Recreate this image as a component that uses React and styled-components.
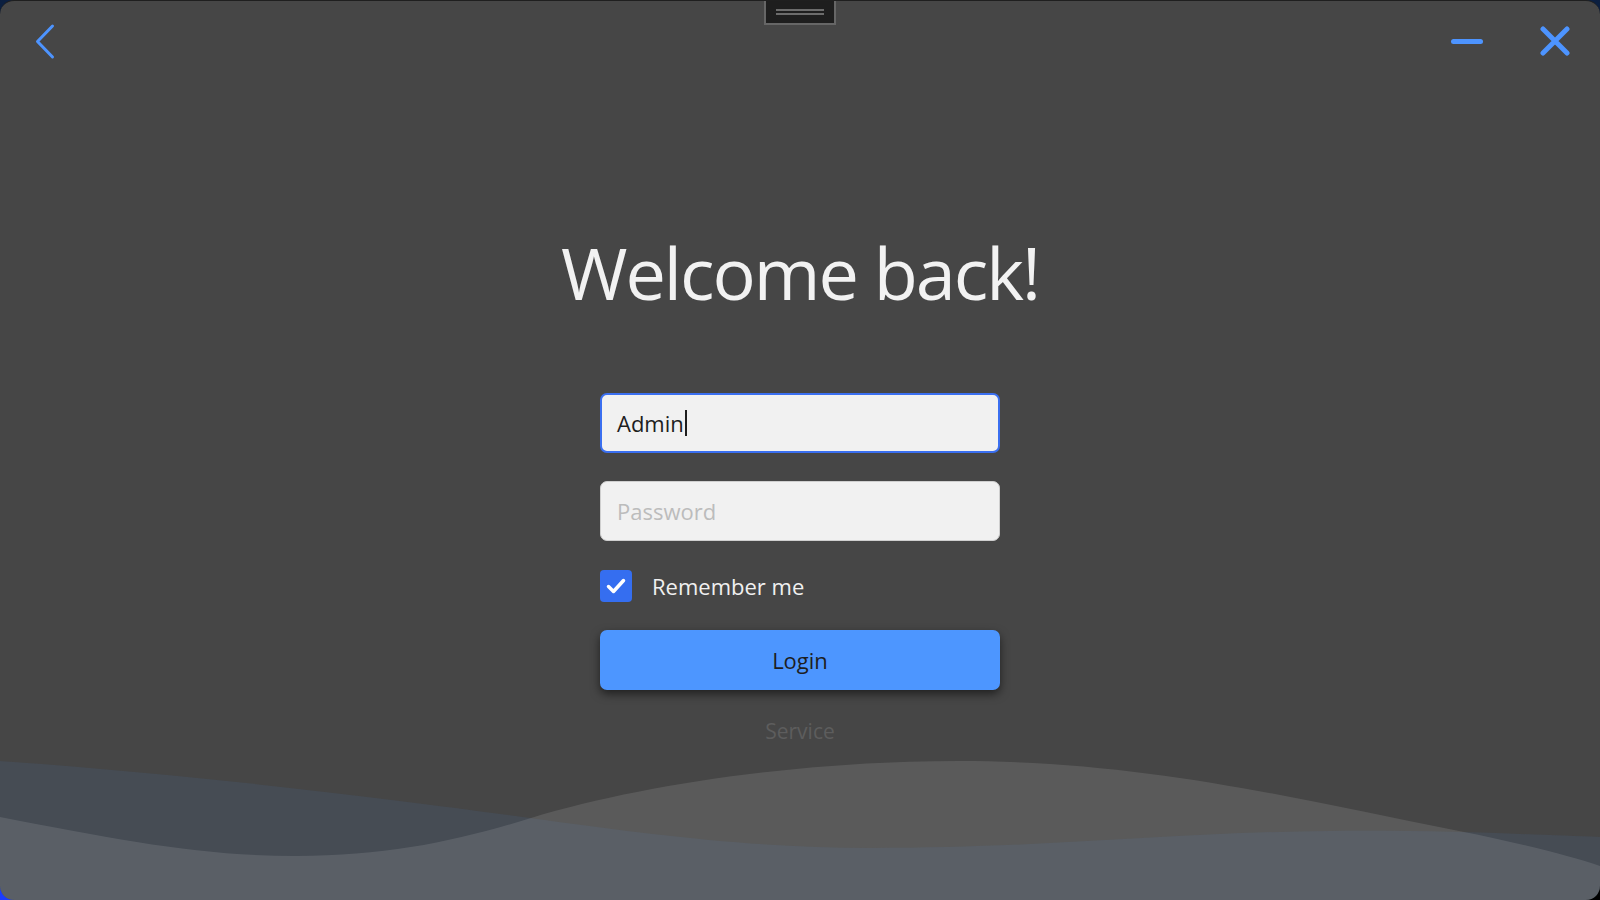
import React from 'react';
import styled, { createGlobalStyle } from 'styled-components';

const GlobalStyle = createGlobalStyle`
  html, body {
    margin: 0;
    padding: 0;
    height: 100%;
  }
  body {
    font-family: "Open Sans", "Noto Sans", sans-serif;
  }
`;

const Styled = {
  Desktop: styled.div`
    width: 100vw;
    height: 100vh;
    background:
      radial-gradient(circle at 0% 100%, #1b3cff 0, #1b3cff 22px, transparent 40px),
      linear-gradient(to bottom, #0b1f40 0%, #07142a 60%, #000 100%);
  `,
  Window: styled.div`
    position: relative;
    width: 100%;
    height: 100%;
    box-sizing: border-box;
    border-top: 1px solid #1f1f1f;
    border-radius: 14px;
    overflow: hidden;
    background-color: #464646;
    display: flex;
    flex-direction: column;
  `,
  TitleBar: styled.div`
    height: 79px;
    flex-shrink: 0;
    display: grid;
    grid-template-columns: 1fr auto 1fr;
    align-items: start;
  `,
  BackButton: styled.div`
    margin: 20px 0 0 33px;
    width: 24px;
    height: 40px;
    cursor: pointer;
  `,
  Handle: styled.div`
    width: 72px;
    height: 24px;
    box-sizing: border-box;
    border: 2px solid #666666;
    border-top: none;
    background-color: #1e1e1e;
    display: flex;
    flex-direction: column;
    align-items: center;
    justify-content: center;
    gap: 2px;
    padding-bottom: 1px;
  `,
  HandleLine: styled.div`
    width: 48px;
    height: 2px;
    background-color: #6c6c6c;
  `,
  Controls: styled.div`
    justify-self: end;
    display: flex;
    align-items: center;
    gap: 57px;
    margin: 25px 30px 0 0;
    height: 30px;
  `,
  Minimize: styled.div`
    width: 32px;
    height: 5px;
    border-radius: 3px;
    background-color: #4d94ff;
    margin-top: 1px;
  `,
  Main: styled.div`
    flex: 1;
    min-height: 0;
    display: flex;
    flex-direction: column;
    align-items: center;
    padding-top: 149px;
  `,
  Title: styled.h1`
    margin: 0;
    font-size: 72px;
    line-height: 1.2;
    font-weight: 400;
    letter-spacing: -2px;
    color: #f2f2f2;
  `,
  Form: styled.div`
    width: 400px;
    margin-top: 78px;
    display: flex;
    flex-direction: column;
  `,
  Field: styled.div`
    height: 60px;
    box-sizing: border-box;
    border: ${props => props.focused ? '2px solid #3a6ff0' : '1px solid #cfcfcf'};
    border-radius: 7px;
    background-color: #f1f1f1;
    display: flex;
    align-items: center;
    padding-left: ${props => props.focused ? '15px' : '16px'};
    margin-bottom: ${props => props.gap}px;
    font-size: 22px;
    color: ${props => props.placeholder ? '#bcbcbc' : '#1e1e1e'};
  `,
  Caret: styled.span`
    display: inline-block;
    width: 2px;
    height: 26px;
    margin-left: 1px;
    background-color: #1e1e1e;
  `,
  CheckRow: styled.label`
    display: flex;
    align-items: center;
    gap: 20px;
    height: 32px;
    margin-bottom: 28px;
    font-size: 22px;
    color: #f0f0f0;
  `,
  CheckBox: styled.div`
    width: 32px;
    height: 32px;
    border-radius: 4px;
    background-color: #356ef0;
    display: flex;
    align-items: center;
    justify-content: center;
  `,
  LoginButton: styled.button`
    height: 60px;
    flex-shrink: 0;
    border: none;
    border-radius: 7px;
    background-color: #4d96ff;
    box-shadow: 0 4px 10px rgba(0, 0, 0, 0.55);
    font-family: "Open Sans", "Noto Sans", sans-serif;
    font-size: 22px;
    color: #1e1e1e;
    cursor: pointer;
  `,
  Service: styled.div`
    margin-top: 27px;
    text-align: center;
    font-size: 21px;
    color: #5d5d5d;
  `,
  Waves: styled.svg`
    display: block;
    flex-shrink: 0;
    width: 100%;
    height: 160px;
  `,
};

function App() {
  return (
    <>
      <GlobalStyle />
      <Styled.Desktop>
        <Styled.Window>
          <Styled.TitleBar>
            <Styled.BackButton>
              <svg width="24" height="40" viewBox="0 0 24 40">
                <polyline points="19.5,5 4.5,20.5 19.5,36" fill="none" stroke="#4d94ff" strokeWidth="3" strokeLinecap="round" strokeLinejoin="round" />
              </svg>
            </Styled.BackButton>
            <Styled.Handle>
              <Styled.HandleLine />
              <Styled.HandleLine />
            </Styled.Handle>
            <Styled.Controls>
              <Styled.Minimize />
              <svg width="30" height="30" viewBox="0 0 30 30">
                <path d="M3 3 L27 27 M27 3 L3 27" stroke="#4d94ff" strokeWidth="5" strokeLinecap="round" />
              </svg>
            </Styled.Controls>
          </Styled.TitleBar>

          <Styled.Main>
            <Styled.Title>Welcome back!</Styled.Title>
            <Styled.Form>
              <Styled.Field focused gap={28}>
                Admin<Styled.Caret />
              </Styled.Field>
              <Styled.Field placeholder gap={29}>
                Password
              </Styled.Field>
              <Styled.CheckRow>
                <Styled.CheckBox>
                  <svg width="22" height="22" viewBox="0 0 22 22">
                    <polyline points="3.5,11.5 8.5,16.5 18.5,5.5" fill="none" stroke="#ffffff" strokeWidth="3.5" strokeLinecap="round" strokeLinejoin="round" />
                  </svg>
                </Styled.CheckBox>
                Remember me
              </Styled.CheckRow>
              <Styled.LoginButton>Login</Styled.LoginButton>
              <Styled.Service>Service</Styled.Service>
            </Styled.Form>
          </Styled.Main>

          <Styled.Waves viewBox="0 0 1600 160" preserveAspectRatio="none">
            <path
              d="M0,21 C200,35 400,60 530,78 C660,96 760,108 870,108 C1050,108 1180,92 1330,91 C1450,90 1540,95 1600,97 L1600,160 L0,160 Z"
              fill="rgba(70, 100, 140, 0.2)"
            />
            <path
              d="M0,77 C120,100 200,116 296,116 C390,116 460,100 531,78 C640,45 800,21 959,21 C1150,21 1300,60 1459,91 C1520,103 1570,116 1600,126 L1600,160 L0,160 Z"
              fill="rgba(255, 255, 255, 0.11)"
            />
          </Styled.Waves>
        </Styled.Window>
      </Styled.Desktop>
    </>
  );
}

export default App;
